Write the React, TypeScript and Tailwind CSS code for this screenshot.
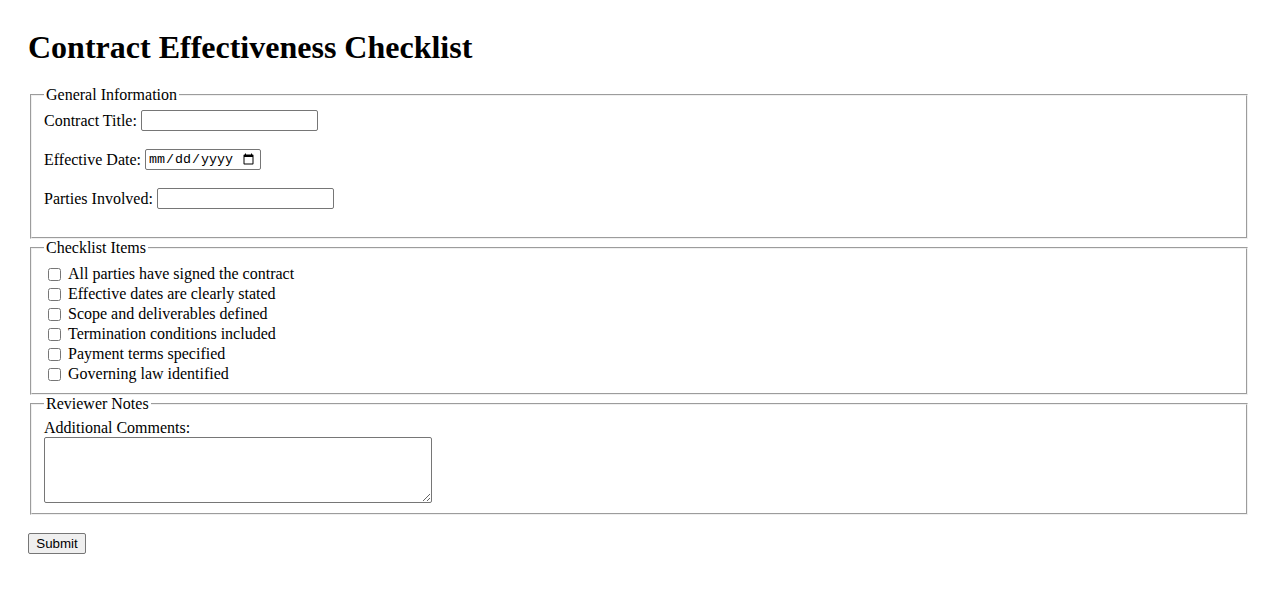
import React from "react";

const items = [
  "All parties have signed the contract",
  "Effective dates are clearly stated",
  "Scope and deliverables defined",
  "Termination conditions included",
  "Payment terms specified",
  "Governing law identified",
];

export default function App() {
  return (
    <div className="min-h-[601px] bg-white px-[28px] pt-[29px] font-['Liberation_Serif','Times_New_Roman',serif] text-[16px] leading-[18px] text-black">
      <h1 className="mb-[20px] text-[32px] font-bold leading-[37px]">Contract Effectiveness Checklist</h1>
      <form onSubmit={(e) => e.preventDefault()}>
        <fieldset className="mx-[2px] border-2 border-[#f0f0f0] px-[12px] pb-[28px] pt-[6px] [border-style:groove]">
          <legend className="px-[2px] leading-[18px]">General Information</legend>
          <div className="flex flex-col gap-[18px]">
            <div className="flex h-[21px] items-center gap-[4px]">
              <label htmlFor="title">Contract Title:</label>
              <input id="title" type="text" className="h-[21px] w-[177px] rounded-[2px] border border-[#767676] bg-white px-[2px] font-['Liberation_Sans',Arial,sans-serif] text-[13.33px]" />
            </div>
            <div className="flex h-[21px] items-center gap-[4px]">
              <label htmlFor="date">Effective Date:</label>
              <input id="date" type="date" className="h-[21px] w-[116px] rounded-[2px] border border-[#767676] bg-white pl-[2px] pr-[3px] font-['Liberation_Mono','Courier_New',monospace] text-[13.33px]" />
            </div>
            <div className="flex h-[21px] items-center gap-[4px]">
              <label htmlFor="parties">Parties Involved:</label>
              <input id="parties" type="text" className="h-[21px] w-[177px] rounded-[2px] border border-[#767676] bg-white px-[2px] font-['Liberation_Sans',Arial,sans-serif] text-[13.33px]" />
            </div>
          </div>
        </fieldset>
        <fieldset className="mx-[2px] border-2 border-[#f0f0f0] px-[12px] pb-[9px] pt-[7px] [border-style:groove]">
          <legend className="px-[2px] leading-[18px]">Checklist Items</legend>
          <div className="flex flex-col">
            {items.map((t) => (
              <label key={t} className="flex h-[20px] items-center">
                <input type="checkbox" className="m-0 ml-[4px] mr-[7px] h-[13px] w-[13px]" />
                <span>{t}</span>
              </label>
            ))}
          </div>
        </fieldset>
        <fieldset className="mx-[2px] border-2 border-[#f0f0f0] px-[12px] pb-[10px] pt-[6px] [border-style:groove]">
          <legend className="px-[2px] leading-[18px]">Reviewer Notes</legend>
          <label htmlFor="notes" className="block leading-[18px]">Additional Comments:</label>
          <textarea id="notes" className="block h-[66px] w-[388px] rounded-[2px] border border-[#767676] bg-white font-['Liberation_Mono',monospace] text-[13.33px]" />
        </fieldset>
        <button type="submit" className="mt-[18px] h-[21px] w-[58px] rounded-[2px] border border-[#767676] bg-[#efefef] font-['Liberation_Sans',Arial,sans-serif] text-[13.33px] leading-[15px] text-black">
          Submit
        </button>
      </form>
    </div>
  );
}
